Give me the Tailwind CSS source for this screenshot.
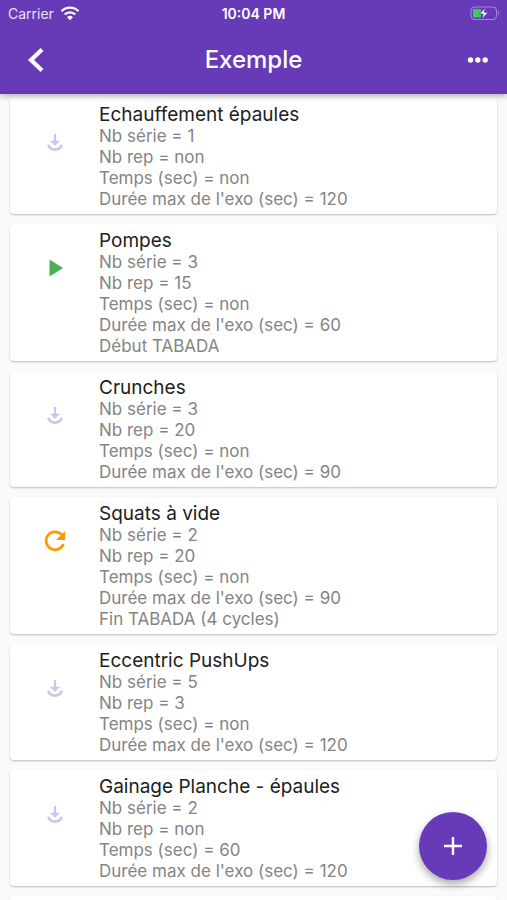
<!DOCTYPE html>
<html lang="fr">
<head>
<meta charset="utf-8">
<meta name="viewport" content="width=device-width, initial-scale=1">
<title>Exemple</title>
<script src="https://cdn.jsdelivr.net/npm/@tailwindcss/browser@4"></script>
</head>
<body class="flex h-screen flex-col overflow-hidden bg-[#fafafa] font-['Inter','Liberation_Sans',sans-serif]">
<svg class="hidden" aria-hidden="true">
  <symbol id="download" viewBox="0 0 20 20"><path d="M10 1V10" fill="none" stroke="currentColor" stroke-width="2.200"/><path d="M5 7.800h10L10 13z" fill="currentColor"/><path d="M3.200 11.800a7.200 7.200 0 0 0 13.600 0" fill="none" stroke="currentColor" stroke-width="2.600"/></symbol>
</svg>
<header class="relative z-10 bg-[#673ab7] text-white shadow-[0_2px_6px_rgba(0,0,0,0.3)]">
  <div class="grid h-7 grid-cols-3 items-center px-2 text-sm">
    <div class="flex items-center gap-1.5 text-white/85">Carrier
      <svg class="h-4 w-5" viewBox="0 0 20 16" aria-label="Wi-Fi"><g fill="none" stroke="white" stroke-width="2.300"><path d="M1.500 5.200a12 12 0 0 1 17 0"/><path d="M4.700 8.500a7.500 7.500 0 0 1 10.600 0"/></g><path d="M10 14.300l-3-3.100a4.300 4.300 0 0 1 6 0z" fill="white"/></svg>
    </div>
    <time class="text-center font-semibold">10:04 PM</time>
    <svg class="h-4 w-8 justify-self-end" viewBox="0 0 32 16" aria-label="Batterie en charge"><rect x="4" y="1" width="25.500" height="12.500" rx="3.500" fill="none" stroke="white" stroke-opacity=".4"/><path d="M31 4.500q2 2.700 0 5.400z" fill="white" fill-opacity=".4"/><rect x="6" y="3" width="8" height="8.500" rx="1" fill="#35cc5b"/><path d="M18.500 1.800L12.500 8h3.800l-1.500 5L21.100 6.300h-4z" fill="white" stroke="#673ab7" stroke-width=".7"/></svg>
  </div>
  <div class="grid h-[66px] grid-cols-[72px_1fr_72px] items-center pb-0.5">
    <button class="flex h-12 items-center justify-center" aria-label="Retour"><svg class="h-7 w-7" viewBox="0 0 28 28"><path d="M20 3.500L9 14 20 24.500" fill="none" stroke="white" stroke-width="4.200"/></svg></button>
    <h1 class="text-center text-2xl font-medium">Exemple</h1>
    <button class="flex h-12 items-center justify-end pr-[18px]" aria-label="Plus d'options"><svg class="h-6 w-6" viewBox="0 0 24 24" fill="white"><circle cx="5.500" cy="12" r="2.700"/><circle cx="12.800" cy="12" r="2.700"/><circle cx="20.200" cy="12" r="2.700"/></svg></button>
  </div>
</header>
<main class="flex-1 overflow-hidden">
  <ul class="flex flex-col gap-2.5 px-2.5 pt-1 text-[17px] leading-[21px] text-[#848484]">
    <li class="flex rounded bg-white pt-1.5 pb-1 shadow-[0_1px_2px_rgba(0,0,0,0.25)]">
      <div class="w-[89px] pt-[29px]"><svg class="mx-auto h-5 w-5 text-[#d1c4e9]"><use href="#download"/></svg></div>
      <div><h2 class="text-[19px] leading-[22px] text-[#212121]">Echauffement épaules</h2><p>Nb série = 1</p><p>Nb rep = non</p><p>Temps (sec) = non</p><p>Durée max de l'exo (sec) = 120</p></div>
    </li>
    <li class="flex rounded bg-white pt-1.5 pb-1 shadow-[0_1px_2px_rgba(0,0,0,0.25)]">
      <div class="w-[89px] pt-[26px]"><svg class="mx-auto h-6 w-6" viewBox="0 0 24 24"><path d="M6.500 3.500v17L20 12z" fill="#4caf50"/></svg></div>
      <div><h2 class="text-[19px] leading-[22px] text-[#212121]">Pompes</h2><p>Nb série = 3</p><p>Nb rep = 15</p><p>Temps (sec) = non</p><p>Durée max de l'exo (sec) = 60</p><p>Début TABADA</p></div>
    </li>
    <li class="flex rounded bg-white pt-1.5 pb-1 shadow-[0_1px_2px_rgba(0,0,0,0.25)]">
      <div class="w-[89px] pt-[29px]"><svg class="mx-auto h-5 w-5 text-[#d1c4e9]"><use href="#download"/></svg></div>
      <div><h2 class="text-[19px] leading-[22px] text-[#212121]">Crunches</h2><p>Nb série = 3</p><p>Nb rep = 20</p><p>Temps (sec) = non</p><p>Durée max de l'exo (sec) = 90</p></div>
    </li>
    <li class="flex rounded bg-white pt-1.5 pb-1 shadow-[0_1px_2px_rgba(0,0,0,0.25)]">
      <div class="w-[89px] pt-[26px]"><svg class="mx-auto h-6 w-6" viewBox="0 0 24 24"><path d="M18.600 5.600A9 9 0 1 0 20.500 15" fill="none" stroke="#ff9800" stroke-width="2.700"/><path d="M22 2v9h-9z" fill="#ff9800"/></svg></div>
      <div><h2 class="text-[19px] leading-[22px] text-[#212121]">Squats à vide</h2><p>Nb série = 2</p><p>Nb rep = 20</p><p>Temps (sec) = non</p><p>Durée max de l'exo (sec) = 90</p><p>Fin TABADA (4 cycles)</p></div>
    </li>
    <li class="flex rounded bg-white pt-1.5 pb-1 shadow-[0_1px_2px_rgba(0,0,0,0.25)]">
      <div class="w-[89px] pt-[29px]"><svg class="mx-auto h-5 w-5 text-[#d1c4e9]"><use href="#download"/></svg></div>
      <div><h2 class="text-[19px] leading-[22px] text-[#212121]">Eccentric PushUps</h2><p>Nb série = 5</p><p>Nb rep = 3</p><p>Temps (sec) = non</p><p>Durée max de l'exo (sec) = 120</p></div>
    </li>
    <li class="flex rounded bg-white pt-1.5 pb-1 shadow-[0_1px_2px_rgba(0,0,0,0.25)]">
      <div class="w-[89px] pt-[29px]"><svg class="mx-auto h-5 w-5 text-[#d1c4e9]"><use href="#download"/></svg></div>
      <div><h2 class="text-[19px] leading-[22px] text-[#212121]">Gainage Planche - épaules</h2><p>Nb série = 2</p><p>Nb rep = non</p><p>Temps (sec) = 60</p><p>Durée max de l'exo (sec) = 120</p></div>
    </li>
    <li class="h-10 rounded bg-white shadow-[0_1px_2px_rgba(0,0,0,0.25)]"></li>
  </ul>
</main>
<button class="fixed right-5 bottom-5 z-20 flex h-[68px] w-[68px] items-center justify-center rounded-full bg-[#673ab7] shadow-[0_4px_9px_rgba(0,0,0,0.35)]" aria-label="Ajouter"><svg class="h-6 w-6" viewBox="0 0 24 24"><path d="M12 3v18M3 12h18" stroke="white" stroke-width="2.400"/></svg></button>
</body>
</html>
